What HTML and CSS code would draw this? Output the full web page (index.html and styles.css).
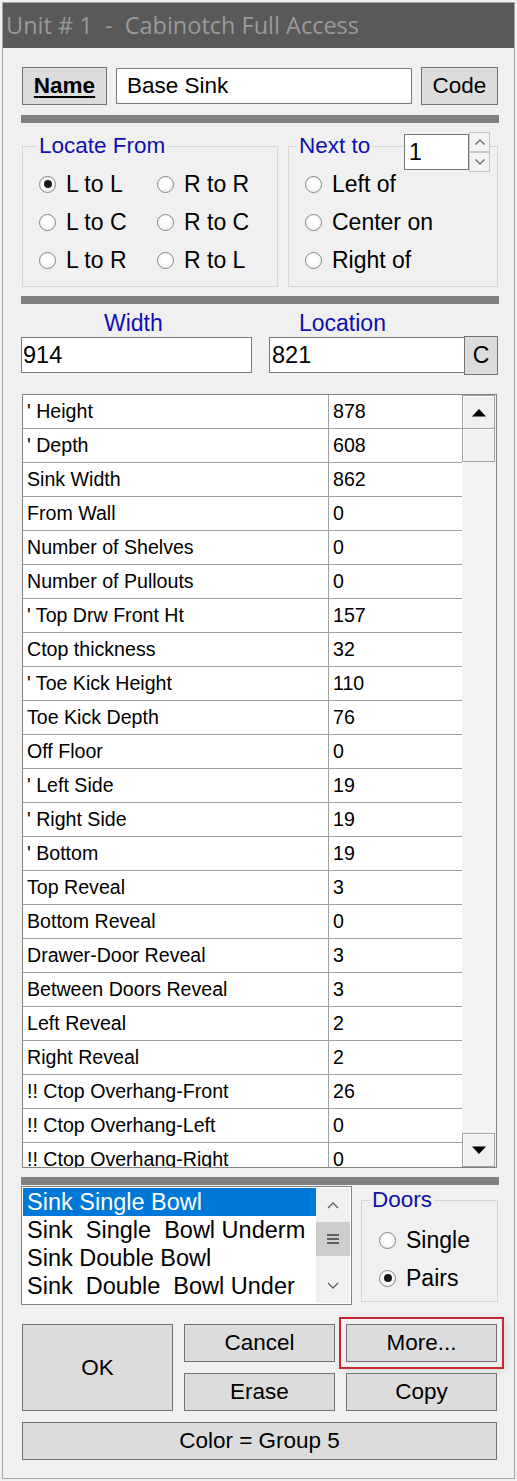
FILE: index.html
```html
<!DOCTYPE html>
<html>
<head>
<meta charset="utf-8">
<link rel="stylesheet" href="styles.css">
</head>
<body>
<div class="window">
  <div class="titlebar">Unit # 1  -  Cabinotch Full Access</div>
  <div class="content">
    <div class="name-row">
      <div class="btn name-btn"><u>Name</u></div>
      <div class="field name-field">Base Sink</div>
      <div class="btn code-btn">Code</div>
    </div>
    <div class="sep sep1"></div>
    <div class="groups">
      <fieldset class="group locate">
        <legend>Locate From</legend>
        <div class="radio-grid">
          <div class="opt"><span class="radio on"></span>L to L</div>
          <div class="opt"><span class="radio"></span>R to R</div>
          <div class="opt"><span class="radio"></span>L to C</div>
          <div class="opt"><span class="radio"></span>R to C</div>
          <div class="opt"><span class="radio"></span>L to R</div>
          <div class="opt"><span class="radio"></span>R to L</div>
        </div>
      </fieldset>
      <fieldset class="group nextto">
        <legend>Next to</legend>
        <div class="spinner">
          <div class="spin-field">1</div>
          <div class="spin-btns">
            <div class="spin-btn"><svg width="12" height="8" viewBox="0 0 12 8"><polyline points="1.5,6.5 6,2 10.5,6.5" fill="none" stroke="#606060" stroke-width="1.2"/></svg></div>
            <div class="spin-btn"><svg width="12" height="8" viewBox="0 0 12 8"><polyline points="1.5,1.5 6,6 10.5,1.5" fill="none" stroke="#606060" stroke-width="1.2"/></svg></div>
          </div>
        </div>
        <div class="radio-col">
          <div class="opt"><span class="radio"></span>Left of</div>
          <div class="opt"><span class="radio"></span>Center on</div>
          <div class="opt"><span class="radio"></span>Right of</div>
        </div>
      </fieldset>
    </div>
    <div class="sep sep2"></div>
    <div class="wl-row">
      <div class="wl-col width-col">
        <div class="blue-label width-label">Width</div>
        <div class="field width-field">914</div>
      </div>
      <div class="wl-col loc-col">
        <div class="blue-label loc-label">Location</div>
        <div class="loc-inputs">
          <div class="field loc-field">821</div>
          <div class="btn c-btn">C</div>
        </div>
      </div>
    </div>
    <div class="table">
      <div class="rows">
        <div class="row"><div class="cell name">' Height</div><div class="cell val">878</div></div>
        <div class="row"><div class="cell name">' Depth</div><div class="cell val">608</div></div>
        <div class="row"><div class="cell name">Sink Width</div><div class="cell val">862</div></div>
        <div class="row"><div class="cell name">From Wall</div><div class="cell val">0</div></div>
        <div class="row"><div class="cell name">Number of Shelves</div><div class="cell val">0</div></div>
        <div class="row"><div class="cell name">Number of Pullouts</div><div class="cell val">0</div></div>
        <div class="row"><div class="cell name">' Top Drw Front Ht</div><div class="cell val">157</div></div>
        <div class="row"><div class="cell name">Ctop thickness</div><div class="cell val">32</div></div>
        <div class="row"><div class="cell name">' Toe Kick Height</div><div class="cell val">110</div></div>
        <div class="row"><div class="cell name">Toe Kick Depth</div><div class="cell val">76</div></div>
        <div class="row"><div class="cell name">Off Floor</div><div class="cell val">0</div></div>
        <div class="row"><div class="cell name">' Left Side</div><div class="cell val">19</div></div>
        <div class="row"><div class="cell name">' Right Side</div><div class="cell val">19</div></div>
        <div class="row"><div class="cell name">' Bottom</div><div class="cell val">19</div></div>
        <div class="row"><div class="cell name">Top Reveal</div><div class="cell val">3</div></div>
        <div class="row"><div class="cell name">Bottom Reveal</div><div class="cell val">0</div></div>
        <div class="row"><div class="cell name">Drawer-Door Reveal</div><div class="cell val">3</div></div>
        <div class="row"><div class="cell name">Between Doors Reveal</div><div class="cell val">3</div></div>
        <div class="row"><div class="cell name">Left Reveal</div><div class="cell val">2</div></div>
        <div class="row"><div class="cell name">Right Reveal</div><div class="cell val">2</div></div>
        <div class="row"><div class="cell name">!! Ctop Overhang-Front</div><div class="cell val">26</div></div>
        <div class="row"><div class="cell name">!! Ctop Overhang-Left</div><div class="cell val">0</div></div>
        <div class="row"><div class="cell name">!! Ctop Overhang-Right</div><div class="cell val">0</div></div>
      </div>
      <div class="vscroll">
        <div class="sb-btn"><svg width="16" height="9" viewBox="0 0 16 9"><polygon points="1,8.5 8,1 15,8.5" fill="#000"/></svg></div>
        <div class="sb-thumb"></div>
        <div class="sb-btn sb-down"><svg width="16" height="9" viewBox="0 0 16 9"><polygon points="1,0.5 15,0.5 8,8" fill="#000"/></svg></div>
      </div>
    </div>
    <div class="sep sep3"></div>
    <div class="bottom-row">
      <div class="listbox">
        <div class="items">
          <div class="item selected">Sink Single Bowl</div>
          <div class="item">Sink  Single  Bowl Underm</div>
          <div class="item">Sink Double Bowl</div>
          <div class="item">Sink  Double  Bowl Under</div>
        </div>
        <div class="lscroll">
          <div class="ls-btn"><svg width="14" height="8" viewBox="0 0 14 8"><polyline points="2,7 7,2 12,7" fill="none" stroke="#606060" stroke-width="1.3"/></svg></div>
          <div class="ls-thumb"><svg width="12" height="10" viewBox="0 0 12 10"><rect x="0" y="0" width="12" height="2" fill="#606060"/><rect x="0" y="4" width="12" height="2" fill="#606060"/><rect x="0" y="8" width="12" height="2" fill="#606060"/></svg></div>
          <div class="ls-btn ls-down"><svg width="14" height="8" viewBox="0 0 14 8"><polyline points="2,1 7,6 12,1" fill="none" stroke="#606060" stroke-width="1.3"/></svg></div>
        </div>
      </div>
      <fieldset class="group doors">
        <legend>Doors</legend>
        <div class="radio-col">
          <div class="opt"><span class="radio"></span>Single</div>
          <div class="opt"><span class="radio on"></span>Pairs</div>
        </div>
      </fieldset>
    </div>
    <div class="buttons">
      <div class="btn ok-btn">OK</div>
      <div class="btn">Cancel</div>
      <div class="btn more-btn">More...</div>
      <div class="btn">Erase</div>
      <div class="btn">Copy</div>
      <div class="btn color-btn">Color = Group 5</div>
    </div>
  </div>
</div>
</body>
</html>
```
FILE: styles.css
```css
* { box-sizing: border-box; }
html, body { margin: 0; padding: 0; background: #f0f0f0; }
body { font-family: "Liberation Sans", Arial, sans-serif; color: #000; }

.window {
  margin: 2px 2px 0 2px;
  width: 513px;
  height: 1477px;
  border: 1px solid #a6a6a6;
  background: #f0f0f0;
}
.titlebar {
  height: 45px;
  background: #595959;
  color: #9a9a9a;
  font-family: "Open Sans", "Noto Sans", sans-serif;
  font-size: 23.5px;
  line-height: 44px;
  padding-left: 3px;
  white-space: pre;
}
.content { padding: 19px 0 0 18px; }

.btn {
  background: #dcdcdc;
  border: 1px solid #737373;
  display: flex;
  align-items: center;
  justify-content: center;
  font-size: 22.5px;
}
.field {
  background: #fff;
  border: 1px solid #7a7a7a;
  display: flex;
  align-items: center;
  font-size: 22.5px;
}

.name-row { display: flex; align-items: center; height: 38px; padding-left: 1px; }
.name-btn { width: 85px; height: 38px; font-weight: bold; }
.name-btn u { text-decoration-thickness: 2px; text-underline-offset: 3px; }
.name-field { width: 296px; height: 36px; margin-left: 9px; padding-left: 10px; }
.code-btn { width: 77px; height: 38px; margin-left: 9px; }

.sep { background: #808080; height: 8px; width: 478px; }
.sep1 { margin-top: 10px; }
.sep2 { margin-top: 9px; }
.sep3 { margin-top: 9px; }

.groups { display: flex; margin-top: 10px; padding-left: 1px; gap: 10px; }
.group {
  margin: 0;
  border: 1px solid #d6d6d6;
  padding: 0;
  position: relative;
}
.group legend {
  color: #1010b0;
  font-size: 22.5px;
  line-height: 26px;
  padding: 0 2px;
  margin-left: 14px;
}
.locate { width: 256px; height: 154px; padding-top: 6px; }
.nextto { width: 210px; height: 154px; padding-top: 6px; }
.nextto legend { margin-left: 8px; }

.radio-grid { display: grid; grid-template-columns: 118px 100px; padding-left: 16px; }
.radio-col { display: flex; flex-direction: column; padding-left: 16px; }
.opt { display: flex; align-items: center; height: 38px; font-size: 23px; white-space: pre; }
.radio {
  width: 17px; height: 17px;
  border-radius: 50%;
  border: 1px solid #858585;
  background: radial-gradient(circle at 50% 40%, #ffffff 30%, #ececec 100%);
  margin-right: 10px;
  display: flex; align-items: center; justify-content: center;
  flex: none;
}
.radio.on::after {
  content: "";
  width: 8px; height: 8px; border-radius: 50%;
  background: #1a1a1a;
}

.spinner { position: absolute; left: 115px; top: -27px; display: flex; }
.spin-field {
  width: 65px; height: 36px; background: #fff; border: 1px solid #7a7a7a;
  font-size: 23px; padding-left: 4px; display: flex; align-items: center;
  margin-top: 2px;
}
.spin-btns { display: flex; flex-direction: column; }
.spin-btn {
  width: 21px; height: 20px; background: #f3f3f3; border: 1px solid #c4c4c4;
  display: flex; align-items: center; justify-content: center;
}

.wl-row { display: flex; margin-top: 6px; }
.wl-col { display: flex; flex-direction: column; }
.blue-label { color: #1010b0; font-size: 23px; line-height: 26px; }
.width-label { margin-left: 83px; }
.loc-label { margin-left: 30px; }
.width-field { width: 231px; height: 36px; margin-top: 1px; padding-left: 1px; font-size: 23.5px; }
.loc-col { margin-left: 17px; }
.loc-inputs { display: flex; align-items: flex-start; }
.loc-field { width: 196px; height: 36px; margin-top: 1px; padding-left: 2px; font-size: 23.5px; }
.c-btn { width: 34px; height: 39px; margin-left: -1px; font-size: 23px; }

.table {
  display: flex;
  margin-top: 19px;
  margin-left: 1px;
  width: 475px;
  height: 774px;
  border: 1px solid #828282;
  background: #fff;
}
.rows { width: 439px; overflow: hidden; }
.row {
  display: grid;
  grid-template-columns: 306px 133px;
  height: 34px;
  border-bottom: 1px solid #a0a0a0;
  font-size: 19.6px;
}
.cell { display: flex; align-items: center; padding-left: 4px; white-space: pre; }
.cell.name { border-right: 1px solid #a0a0a0; }
.vscroll {
  width: 34px;
  display: flex; flex-direction: column;
  background-color: #f0f0f0;
  background-image: repeating-conic-gradient(#fbfbfb 0 25%, #ececec 0 50%);
  background-size: 2px 2px;
}
.sb-btn, .sb-thumb {
  width: 33px; height: 34px;
  background: #f0f0f0;
  border: 1px solid #a0a0a0;
  box-shadow: inset 1px 1px 0 #fff;
  display: flex; align-items: center; justify-content: center;
}
.sb-thumb { margin-top: -1px; }
.sb-down { margin-top: auto; }

.bottom-row { display: flex; margin-top: 1px; }
.listbox {
  display: flex;
  width: 331px; height: 119px;
  border: 1px solid #828282;
  padding: 1px;
  background: #fff;
}
.items { width: 293px; }
.item { height: 28px; font-size: 23.5px; line-height: 28px; padding-left: 4px; white-space: pre; }
.item.selected { background: #0078d7; color: #fff; }
.lscroll { width: 34px; display: flex; flex-direction: column; background: #f0f0f0; }
.ls-btn { height: 34px; display: flex; align-items: center; justify-content: center; }
.ls-thumb { height: 34px; background: #cdcdcd; display: flex; align-items: center; justify-content: center; }
.ls-down { margin-top: auto; }

.doors { width: 137px; height: 115px; margin-left: 9px; margin-top: 1px; padding-top: 8px; }
.doors legend { margin-left: 8px; }
.doors .radio-col { padding-left: 17px; }

.buttons {
  display: grid;
  grid-template-columns: 151px 151px 151px;
  grid-template-rows: 38px 38px 38px;
  gap: 11px;
  margin-top: 19px;
  margin-left: 1px;
}
.ok-btn { grid-row: 1 / span 2; }
.color-btn { grid-column: 1 / span 3; }
.more-btn { outline: 2px solid #c42b30; outline-offset: 5px; box-shadow: 0 0 0 6px #f0f0f0, 2px 2px 8px 6px rgba(0,0,0,0.12); }
```
